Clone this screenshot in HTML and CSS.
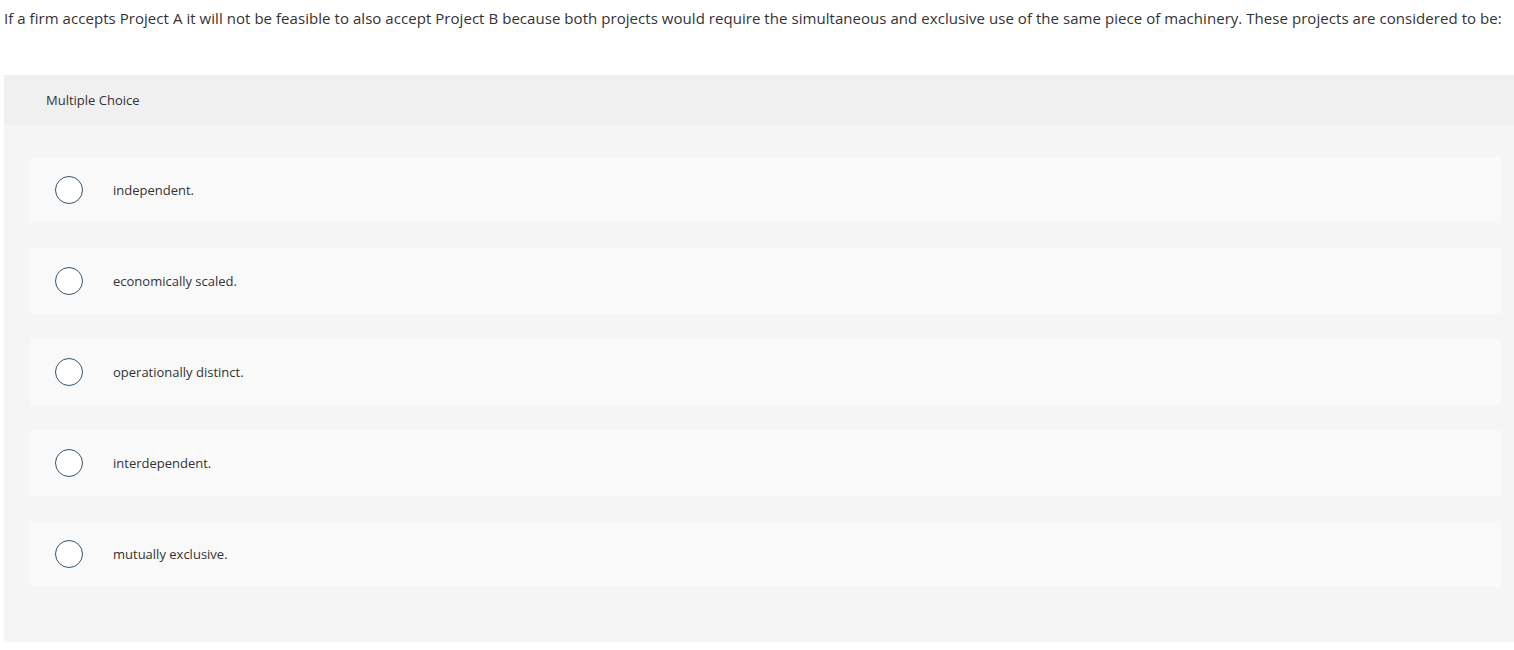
FILE: index.html
```html
<!DOCTYPE html>
<html lang="en">
<head>
    <meta charset="UTF-8">
    <title>Multiple Choice</title>
    <link rel="stylesheet" href="styles.css">
</head>
<body>
    <!-- Question -->
    <p class="question">If a firm accepts Project A it will not be feasible to also accept Project B because both projects would require the simultaneous and exclusive use of the same piece of machinery. These projects are considered to be:</p>

    <!-- Answer panel -->
    <div class="panel">
        <div class="panel-head">Multiple Choice</div>
        <div class="choices">
            <label class="choice"><span class="radio"></span><span class="choice-text">independent.</span></label>
            <label class="choice"><span class="radio"></span><span class="choice-text">economically scaled.</span></label>
            <label class="choice"><span class="radio"></span><span class="choice-text">operationally distinct.</span></label>
            <label class="choice"><span class="radio"></span><span class="choice-text">interdependent.</span></label>
            <label class="choice"><span class="radio"></span><span class="choice-text">mutually exclusive.</span></label>
        </div>
    </div>
</body>
</html>
```

FILE: styles.css
```css
* {
    margin: 0;
    padding: 0;
    box-sizing: border-box;
}

body {
    font-family: 'Open Sans', Lato, sans-serif;
    color: #333;
    background: #fff;
    padding: 8px 0 0 4px;
}

/* Question text */
.question {
    font-size: 15px;
    line-height: 20px;
    color: #333;
    white-space: nowrap;
    letter-spacing: 0.05px;
    font-variant-ligatures: none;
}

/* Panel */
.panel {
    margin-top: 47px;
    background: #f5f5f5;
}

.panel-head {
    background: #f0f0f0;
    height: 50px;
    padding-left: 42px;
    display: flex;
    align-items: center;
    font-size: 13px;
    color: #333;
}

.choices {
    display: flex;
    flex-direction: column;
    gap: 25px;
    padding: 32px 13px 55px 26px;
}

.choice {
    display: flex;
    align-items: center;
    height: 66px;
    background: #f9f9f9;
    padding-left: 25px;
    cursor: pointer;
}

.radio {
    width: 28px;
    height: 28px;
    border: 1.5px solid #35536a;
    border-radius: 50%;
    background: #fff;
    flex-shrink: 0;
}

.choice-text {
    margin-left: 30px;
    font-size: 13px;
    color: #333;
}
```
